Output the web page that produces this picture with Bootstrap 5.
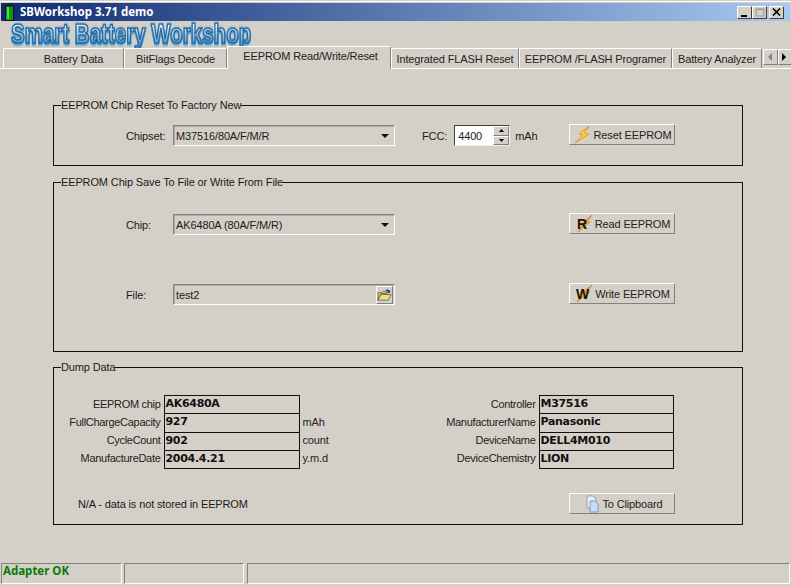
<!DOCTYPE html>
<html lang="en">
<head>
<meta charset="UTF-8">
<title>SBWorkshop 3.71 demo</title>
<link href="https://cdn.jsdelivr.net/npm/bootstrap@5.3.2/dist/css/bootstrap.min.css" rel="stylesheet">
<style>
  html, body { height: 586px; overflow: hidden; }
  body { background: #d4d0c8; color: #1a1a1a; font-family: "Liberation Sans", Arial, sans-serif; font-size: 11px; line-height: 14px; letter-spacing: -.13px; }
  .sb-window { height: 586px; border-top: 1px solid #fff; margin-top: 1px; padding-top: 1px; }
  .sb-title { height: 18px; margin: 0 1px; padding: 0 6px 0 4px; background: linear-gradient(90deg, #0f2a72, #a6caf0); color: #fff; font: bold 11.5px/18px "Noto Sans", sans-serif; letter-spacing: 0; }
  .sb-title-left { gap: 6px; }
  .sb-winbtn { width: 15px; height: 13px; padding: 0; border: 1px solid; border-color: #fff #404040 #404040 #fff; background: #d4d0c8; display: flex; align-items: center; justify-content: center; }
  .sb-winbtn-close { margin-left: 2px; }
  .sb-logo { height: 26px; padding-left: 11px; font: bold 27px/26px "Liberation Sans", sans-serif; letter-spacing: 0; white-space: nowrap; }
  .sb-logo span { display: inline-block; transform: scaleX(.76); transform-origin: left center; background: linear-gradient(180deg, #f0f6fc 10%, #a8cce6 48%, #4f9ad0 88%); -webkit-background-clip: text; background-clip: text; color: transparent; -webkit-text-stroke: 1.6px #2a689e; filter: drop-shadow(0 1px 1px #2f8ec8) drop-shadow(0 0 1px #6fb4dc); }
  .sb-tabs { height: 20px; padding-left: 3px; margin-top: 1px; border: 0; flex-wrap: nowrap; position: relative; z-index: 1; }
  .sb-tabs .nav-link { height: 20px; border: 0; border-radius: 2px 2px 0 0; border-top: 1px solid #fff; border-left: 1px solid #fff; border-right: 1px solid #808080; color: #222; padding: 3px 0 0; text-align: center; margin: 0; background: #d4d0c8; white-space: nowrap; font-size: 11px; }
  .sb-tabs .nav-link.active { height: 23px; margin-top: -2px; padding-top: 2px; background: #d4d0c8; color: #222; position: relative; border-top: 1px solid #fff; border-left: 1px solid #fff; border-right: 1px solid #808080; }
  .sb-tab-1 { width: 121px; padding-left: 20px !important; }
  .sb-tab-2 { width: 103px; }
  .sb-tab-3 { width: 164px; padding-left: 3px !important; }
  .sb-tab-4 { width: 128px; }
  .sb-tab-5 { width: 153px; }
  .sb-tab-6 { width: 90px; }
  .sb-scroll { width: 29px; display: flex; height: 19px; margin-left: 1px; }
  .sb-scroll div { width: 15px; height: 16px; margin-top: 1px; border: 1px solid; border-color: #fff #808080 #808080 #fff; display: flex; align-items: center; justify-content: center; }
  .sb-page { height: 490px; border-top: 1px solid #fff; padding: 29px 48px 0 53px; }
  .sb-group { border: 1px solid #111; padding: 0; margin: 0 0 9px; min-width: 0; }
  .sb-group legend { float: none; width: auto; margin: 0 0 0 7px; padding: 0; font-size: 11px; line-height: 14px; height: 14px; }
  .sb-group-reset { height: 68px; }
  .sb-group-file { height: 177px; margin-bottom: 8px; }
  .sb-group-dump { height: 165px; }
  .sb-line { display: flex; align-items: center; height: 21px; }
  .sb-line-reset { margin-top: 13px; }
  .sb-line-chip { margin-top: 25px; }
  .sb-line-file { margin-top: 49px; }
  .sb-label-a { width: 47px; margin-left: 72px; }
  .sb-fcc { margin-left: 27px; }
  .sb-combo { width: 222px; height: 21px; border: 1px solid; border-color: #808080 #fff #fff #808080; display: flex; align-items: center; justify-content: space-between; padding: 0 5px 0 2px; box-shadow: inset 1px 1px 0 #aaa; }
  .sb-caret { width: 0; height: 0; border: 4px solid transparent; border-top: 4px solid #111; border-bottom: 0; }
  .sb-spin { width: 56px; height: 21px; background: #fff; border: 1px solid; border-color: #404040 #eee #eee #404040; margin: 0 5px 0 7px; display: flex; padding-left: 3px; align-items: center; justify-content: space-between; }
  .sb-spin-btns { width: 16px; height: 19px; display: flex; flex-direction: column; }
  .sb-spin-btns div { flex: 1; background: #d4d0c8; border: 1px solid; border-color: #fff #808080 #808080 #fff; display: flex; align-items: center; justify-content: center; }
  .sb-btn { width: 106px; height: 21px; padding: 0; border: 1px solid; border-color: #fff #808080 #808080 #fff; border-radius: 0; background: #d4d0c8; color: #222; font-size: 11px; line-height: 14px; letter-spacing: -.13px; display: flex; align-items: center; justify-content: center; gap: 1px; white-space: nowrap; }
  .sb-btn svg { flex: none; }
  .sb-btn-end { margin-left: auto; margin-right: 67px; margin-top: -2px; }
  .sb-file-btn { width: 17px; height: 18px; display: flex; margin-right: -4px; border: 1px solid; border-color: #fff #808080 #808080 #fff; }
  .sb-dump { display: flex; height: 73px; margin-top: 21px; }
  .sb-dump-table { width: auto; margin: 0; border-collapse: collapse; --bs-table-bg: transparent; }
  .sb-dump-table th, .sb-dump-table td { height: 18.25px; padding: 1px 0 0; line-height: 14px; font-size: 11px; border: 0; box-shadow: none; background: transparent; font-weight: 400; white-space: nowrap; color: #222; }
  .sb-dump-table th { text-align: right; padding-right: 3px; letter-spacing: -.3px; }
  .sb-dump-table .sb-val { width: 135px; border: 1px solid #111; padding-left: 1px; font: bold 11px/14px "DejaVu Sans", sans-serif; letter-spacing: -.3px; color: #111; }
  .sb-right .sb-val { width: 134px; }
  .sb-dump-table .sb-unit { padding-left: 3px; }
  .sb-left th { width: 110px; }
  .sb-left .sb-unit { width: 142px; }
  .sb-right th { width: 98px; }
  .sb-foot { display: flex; align-items: center; margin-top: 25px; padding-left: 24px; }
  .sb-foot .sb-btn-end { margin-top: 0; }
  .sb-status { height: 21px; margin-top: 5px; padding: 0 1px; display: flex; gap: 2px; }
  .sb-status div { border: 1px solid; border-color: #808080 #fff #fff #808080; height: 21px; }
  .sb-status-1 { width: 121px; color: #0a7a0a; font: bold 11.5px/14px "Noto Sans", sans-serif; letter-spacing: 0; padding-left: 1px; }
  .sb-status-2 { width: 120px; }
  .sb-status-3 { flex-grow: 1; margin-left: 1px; }
</style>
</head>
<body>
<div class="sb-window d-flex flex-column">
  <div class="sb-title d-flex align-items-center justify-content-between">
    <div class="d-flex align-items-center sb-title-left">
      <svg width="9" height="17" viewBox="0 0 9 17"><rect x="2.5" y="0" width="4" height="2" fill="#222"/><rect x=".5" y="2" width="8" height="14.5" fill="#0a9a1a" stroke="#111"/><rect x="2" y="3" width="2" height="12" fill="#50d850"/></svg>
      <span>SBWorkshop 3.71 demo</span>
    </div>
    <div class="d-flex">
      <div class="sb-winbtn"><svg width="9" height="9"><rect x="1" y="7" width="6" height="2" fill="#000"/></svg></div>
      <div class="sb-winbtn"><svg width="10" height="9"><rect x="1" y="1" width="8" height="7" fill="none" stroke="#999"/><rect x="1" y="1" width="8" height="1" fill="#999"/></svg></div>
      <div class="sb-winbtn sb-winbtn-close"><svg width="9" height="8"><path d="M1 0.5 8 7.5M8 0.5 1 7.5" stroke="#000" stroke-width="1.6"/></svg></div>
    </div>
  </div>
  <div class="sb-logo"><span>Smart Battery Workshop</span></div>
  <ul class="nav nav-tabs sb-tabs">
    <li class="nav-item"><a class="nav-link sb-tab-1" href="#">Battery Data</a></li>
    <li class="nav-item"><a class="nav-link sb-tab-2" href="#">BitFlags Decode</a></li>
    <li class="nav-item"><a class="nav-link active sb-tab-3" href="#">EEPROM Read/Write/Reset</a></li>
    <li class="nav-item"><a class="nav-link sb-tab-4" href="#">Integrated FLASH Reset</a></li>
    <li class="nav-item"><a class="nav-link sb-tab-5" href="#">EEPROM /FLASH Programer</a></li>
    <li class="nav-item"><a class="nav-link sb-tab-6" href="#">Battery Analyzer</a></li>
    <li class="sb-scroll">
      <div><svg width="5" height="8"><path d="M4 0 0 4 4 8Z" fill="#808080"/></svg></div>
      <div><svg width="5" height="8"><path d="M0 0 4 4 0 8Z" fill="#000"/></svg></div>
    </li>
  </ul>
  <div class="sb-page">
    <fieldset class="sb-group sb-group-reset">
      <legend>EEPROM Chip Reset To Factory New</legend>
      <div class="sb-line sb-line-reset">
        <span class="sb-label-a">Chipset:</span>
        <div class="sb-combo"><span>M37516/80A/F/M/R</span><i class="sb-caret"></i></div>
        <span class="sb-fcc">FCC:</span>
        <div class="sb-spin"><span>4400</span>
          <div class="sb-spin-btns">
            <div><svg width="5" height="3"><path d="M2.5 0 5 3H0Z" fill="#000"/></svg></div>
            <div><svg width="5" height="3"><path d="M0 0H5L2.5 3Z" fill="#000"/></svg></div>
          </div>
        </div>
        <span>mAh</span>
        <button class="btn sb-btn sb-btn-end" type="button">
          <svg width="20" height="18" viewBox="0 0 20 18"><path d="M15 1 6 8l4 1-8 8 14-9-5-1 5-6Z" fill="#f8d828" stroke="#e09030" stroke-width=".9"/></svg>
          Reset EEPROM
        </button>
      </div>
    </fieldset>
    <fieldset class="sb-group sb-group-file">
      <legend>EEPROM Chip Save To File or Write From File</legend>
      <div class="sb-line sb-line-chip">
        <span class="sb-label-a">Chip:</span>
        <div class="sb-combo"><span>AK6480A (80A/F/M/R)</span><i class="sb-caret"></i></div>
        <button class="btn sb-btn sb-btn-end" type="button">
          <svg width="20" height="18" viewBox="0 0 20 18"><path d="M18 0 13 7h3L4 17l5-8H7Z" fill="#f0b020" stroke="#c87030" stroke-width=".6"/><text x="3" y="14" font-family="Liberation Sans" font-weight="bold" font-size="14" fill="#201008">R</text></svg>
          Read EEPROM
        </button>
      </div>
      <div class="sb-line sb-line-file">
        <span class="sb-label-a">File:</span>
        <div class="sb-combo"><span>test2</span>
          <div class="sb-file-btn"><svg width="15" height="16" viewBox="0 0 16 15"><path d="M1 5h4l1-1h5v2H4L1 13Z" fill="#e8d860" stroke="#555" stroke-width=".8"/><path d="M1 13 4 7h11l-3 6Z" fill="#f0e070" stroke="#555" stroke-width=".8"/><path d="M9 3c1-2 3-2 4 0l1-1v3h-3l1-1c-1-1-2-1-3-1Z" fill="#203080"/></svg></div>
        </div>
        <button class="btn sb-btn sb-btn-end" type="button">
          <svg width="20" height="18" viewBox="0 0 20 18"><path d="M18 0 13 7h3L3 17l5-8H6Z" fill="#f0b020" stroke="#c87030" stroke-width=".6"/><text x="2" y="14" font-family="Liberation Sans" font-weight="bold" font-size="14" fill="#201008">W</text></svg>
          Write EEPROM
        </button>
      </div>
    </fieldset>
    <fieldset class="sb-group sb-group-dump">
      <legend>Dump Data</legend>
      <div class="sb-dump">
        <table class="table sb-dump-table sb-left">
          <tr><th>EEPROM chip</th><td class="sb-val">AK6480A</td><td class="sb-unit"></td></tr>
          <tr><th>FullChargeCapacity</th><td class="sb-val">927</td><td class="sb-unit">mAh</td></tr>
          <tr><th>CycleCount</th><td class="sb-val">902</td><td class="sb-unit">count</td></tr>
          <tr><th>ManufactureDate</th><td class="sb-val">2004.4.21</td><td class="sb-unit">y.m.d</td></tr>
        </table>
        <table class="table sb-dump-table sb-right">
          <tr><th>Controller</th><td class="sb-val">M37516</td></tr>
          <tr><th>ManufacturerName</th><td class="sb-val">Panasonic</td></tr>
          <tr><th>DeviceName</th><td class="sb-val">DELL4M010</td></tr>
          <tr><th>DeviceChemistry</th><td class="sb-val">LION</td></tr>
        </table>
      </div>
      <div class="sb-foot">
        <span>N/A - data is not stored in EEPROM</span>
        <button class="btn sb-btn sb-btn-end" type="button">
          <svg width="20" height="18" viewBox="0 0 20 18"><path d="M6 1h6l3 3v9H6Z" fill="#e8eef8" stroke="#8090b0" stroke-width=".8"/><path d="M9 6h5l3 3v8H9Z" fill="#c8dcf4" stroke="#7088b0" stroke-width=".8"/></svg>
          To Clipboard
        </button>
      </div>
    </fieldset>
  </div>
  <div class="sb-status">
    <div class="sb-status-1">Adapter OK</div>
    <div class="sb-status-2"></div>
    <div class="sb-status-3"></div>
  </div>
</div>
<script src="https://cdn.jsdelivr.net/npm/bootstrap@5.3.2/dist/js/bootstrap.bundle.min.js"></script>
</body>
</html>
